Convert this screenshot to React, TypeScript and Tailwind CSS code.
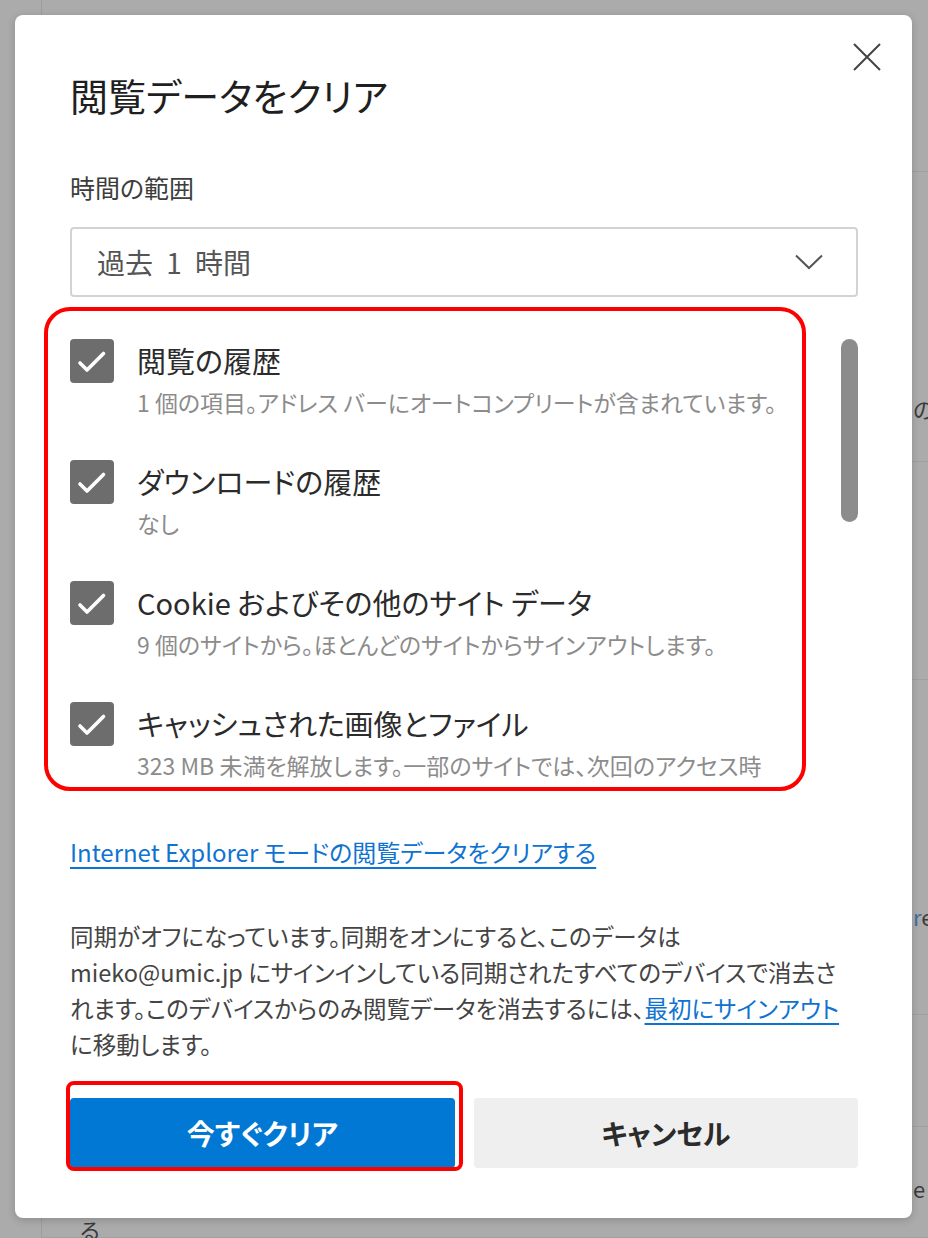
import { Fragment } from "react";

const items = [
  {
    title: "閲覧の履歴",
    detail: "1 個の項目。アドレス バーにオートコンプリートが含まれています。",
  },
  { title: "ダウンロードの履歴", detail: "なし" },
  {
    title: "Cookie およびその他のサイト データ",
    detail: "9 個のサイトから。ほとんどのサイトからサインアウトします。",
  },
  {
    title: "キャッシュされた画像とファイル",
    detail: "323 MB 未満を解放します。一部のサイトでは、次回のアクセス時",
  },
];

const bgRows = [
  { h: "h-[172px]", pad: "", text: "" },
  { h: "h-[290px]", pad: "pt-[225px]", text: "の" },
  { h: "h-[218px]", pad: "", text: "" },
  { h: "h-[335px]", pad: "pt-[225px]", text: "re" },
  { h: "h-[112px]", pad: "", text: "" },
  { h: "flex-1", pad: "pt-[50px]", text: "e" },
];

function CheckBox() {
  return (
    <div className="w-[44px] h-[44px] shrink-0 rounded-[4px] bg-[#6d6d6d] flex items-center justify-center">
      <svg width="44" height="44" viewBox="0 0 44 44" fill="none">
        <path
          d="M10 24 L17 31 L33.5 14.5"
          stroke="white"
          strokeWidth="3.6"
          strokeLinecap="round"
          strokeLinejoin="round"
        />
      </svg>
    </div>
  );
}

export default function App() {
  return (
    <div className="relative w-[928px] h-[1238px] overflow-hidden bg-[#ababab] font-['Noto_Sans_CJK_JP','Noto_Sans',sans-serif] [font-feature-settings:'palt']">
      {/* page behind the modal */}
      <div className="flex h-full">
        <div className="w-[42px] shrink-0 border-r border-[#9c9c9c]" />
        <div className="flex-1 flex flex-col">
          {bgRows.map((row, i) => (
            <div
              key={i}
              className={`${row.h} ${row.pad} border-b border-[#a0a0a0] pl-[871px] whitespace-nowrap text-[22px] leading-none text-[#3a3a3a]`}
            >
              {row.text === "re" ? (
                <Fragment>
                  <span className="text-[#3f6f9f]">r</span>e
                </Fragment>
              ) : (
                row.text
              )}
            </div>
          ))}
        </div>
      </div>
      <div className="absolute left-[80px] top-[1218px] text-[22px] leading-none text-[#3a3a3a]">る</div>

      {/* dialog */}
      <div className="absolute left-[15px] top-[15px] w-[897px] h-[1203px] rounded-[8px] bg-white shadow-[0_2px_8px_rgba(0,0,0,0.18)] pt-[28px] pl-[55px] pr-[54px]">
        <div className="flex justify-between items-start">
          <h2 className="mt-[33px] text-[38px] leading-none text-[#1f1f1f] font-normal">
            閲覧データをクリア
          </h2>
          <button className="w-[28px] h-[28px] -mr-[23px] flex items-center justify-center">
            <svg width="28" height="28" viewBox="0 0 28 28" fill="none">
              <path d="M1 1 L27 27 M27 1 L1 27" stroke="#444" strokeWidth="2" />
            </svg>
          </button>
        </div>

        <div className="mt-[61px] text-[25px] leading-none text-[#3d3d3d]">時間の範囲</div>

        <div className="mt-[27px] h-[70px] rounded-[4px] border-2 border-[#d3d3d3] flex items-center justify-between pl-[25px] pr-[33px]">
          <span className="text-[28px] leading-none text-[#555] [word-spacing:7px]">過去 1 時間</span>
          <svg width="28" height="16" viewBox="0 0 28 16" fill="none">
            <path d="M1 1.5 L14 14 L27 1.5" stroke="#555" strokeWidth="2" />
          </svg>
        </div>

        <div className="mt-[13px] h-[480px] flex overflow-hidden">
          <div className="flex-1 pt-[29px] flex flex-col">
            {items.map((it) => (
              <div key={it.title} className="h-[121px] shrink-0 flex gap-[23px]">
                <CheckBox />
                <div className="flex flex-col whitespace-nowrap">
                  <div className="mt-[7px] text-[29px] leading-none text-[#2b2b2b]">{it.title}</div>
                  <div className="mt-[16px] text-[23px] leading-none text-[#8c8c8c]">{it.detail}</div>
                </div>
              </div>
            ))}
          </div>
          <div className="w-[17px] shrink-0 pt-[29px]">
            <div className="h-[183px] rounded-full bg-[#8c8c8c]" />
          </div>
        </div>

        <a
          href="#"
          className="mt-[50px] inline-block text-[24px] leading-none text-[#0f73d1] underline decoration-2 underline-offset-[5px]"
        >
          Internet Explorer モードの閲覧データをクリアする
        </a>

        <p className="mt-[51px] text-[23.5px] leading-[36px] text-[#444] whitespace-nowrap">
          同期がオフになっています。同期をオンにすると、このデータは
          <br />
          mieko@umic.jp にサインインしている同期されたすべてのデバイスで消去さ
          <br />
          れます。このデバイスからのみ閲覧データを消去するには、
          <a href="#" className="text-[#0f73d1] underline decoration-2 underline-offset-[5px]">
            最初にサインアウト
          </a>
          <br />
          に移動します。
        </p>

        <div className="mt-[36px] grid grid-cols-2 gap-[19px]">
          <button className="h-[70px] rounded-[4px] bg-[#0078d4] text-white text-[28px] font-semibold">
            今すぐクリア
          </button>
          <button className="h-[70px] rounded-[4px] bg-[#efefef] text-[#2b2b2b] text-[28px] font-semibold">
            キャンセル
          </button>
        </div>
      </div>

      {/* red annotation frames */}
      <div className="absolute left-[44px] top-[307px] w-[762px] h-[484px] rounded-[26px] border-4 border-[#ff0000]" />
      <div className="absolute left-[66px] top-[1081px] w-[397px] h-[90px] rounded-[8px] border-4 border-[#ff0000]" />
    </div>
  );
}
